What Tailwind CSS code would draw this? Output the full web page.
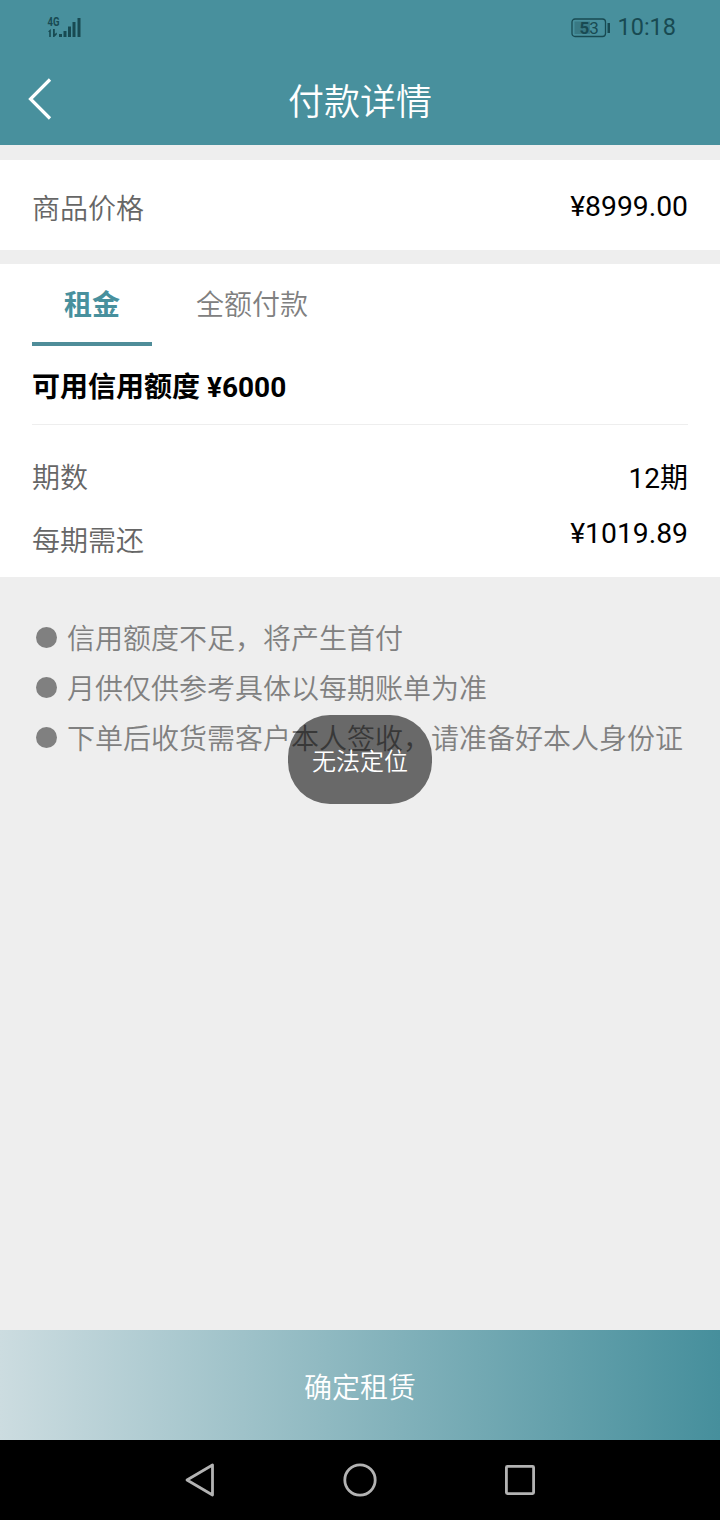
<!DOCTYPE html>
<html lang="zh-CN">
<head>
<meta charset="utf-8">
<title>付款详情</title>
<script src="https://cdn.jsdelivr.net/npm/@tailwindcss/browser@4"></script>
</head>
<body class="relative flex h-[1520px] w-[720px] flex-col overflow-hidden bg-[#eeeeee] font-['Roboto','Noto_Sans_CJK_SC',sans-serif] text-[28px] leading-10 text-black">
  <header class="h-[145px] shrink-0 bg-[#48909d]">
    <div class="flex h-14 items-center justify-between pr-11 pl-[46px] text-[#184a52]">
      <svg class="h-6 w-9" viewBox="0 0 36 24" fill="currentColor">
        <text x="1.500" y="10" font-family="Roboto" font-size="12" font-weight="700" textLength="12" lengthAdjust="spacingAndGlyphs">4G</text>
        <path d="M2 15.500l2.800-2.500v8H3.200v-5zM7 13h1.800v5l2-1.500v2L8.200 21H7zM13 18h3v3h-3zM17.500 15h3v6h-3zM22 10.500h3V21h-3zM26.500 6h3v15h-3zM31.500 2h3v19h-3z"/>
      </svg>
      <div class="flex items-center gap-1.5">
        <svg class="h-5 w-10" viewBox="0 0 40 20">
          <rect x="1" y="1" width="33.500" height="17.500" rx="3" fill="none" stroke="currentColor" stroke-width="1.300"/>
          <rect x="3.500" y="3.500" width="15.500" height="12.500" fill="#397984"/>
          <rect x="36.500" y="5" width="2.500" height="10" fill="currentColor"/>
          <text x="8.500" y="15.500" font-family="Roboto" font-size="17" fill="currentColor"><tspan font-weight="700">5</tspan>3</text>
        </svg>
        <span class="text-[23.500px] leading-none">10:18</span>
      </div>
    </div>
    <div class="grid h-[89px] grid-cols-[1fr_auto_1fr] items-center text-white">
      <svg class="mb-[3px] ml-7 h-[44px] w-6" viewBox="0 0 24 44" fill="none" stroke="#fff" stroke-width="3.200"><path d="M22 2.500L2.500 22l19.500 19.500"/></svg>
      <h1 class="pt-1 text-[36px] font-[350]">付款详情</h1>
    </div>
  </header>

  <section class="mt-[15px] flex h-[90px] shrink-0 items-center justify-between bg-white px-8">
    <span class="mt-2.5 font-[350] text-[#666]">商品价格</span><span class="mt-1 text-[28.300px]">¥8999.00</span>
  </section>

  <section class="mt-3.5 h-[313px] shrink-0 bg-white px-8">
    <nav class="flex h-[82px]">
      <div class="flex w-[120px] justify-center border-b-4 border-[#4f8d99] pt-[22px] font-bold text-[#48909d]">租金</div>
      <div class="ml-[29px] flex w-[142px] justify-center pt-[22px] font-[350] text-[#808080]">全额付款</div>
    </nav>
    <div class="flex h-[79px] items-center border-b border-[#eeeeee] pt-[5px] font-bold">可用信用额度 ¥6000</div>
    <div class="flex justify-between pt-[34px]"><span class="font-[350] text-[#666]">期数</span><span>12期</span></div>
    <div class="mt-[15px] flex items-start justify-between"><span class="mt-2 font-[350] text-[#666]">每期需还</span><span class="text-[28.300px]">¥1019.89</span></div>
  </section>

  <ul class="mt-9 flex flex-col font-[350] leading-[50px] text-[#808080]">
    <li class="flex h-[50px] items-center pl-9"><i class="mr-[11px] mb-0.5 size-[21px] rounded-full bg-[#808080]"></i><span class="-ml-px pt-[3px]">信用额度不足，将产生首付</span></li>
    <li class="flex h-[50px] items-center pl-9"><i class="mr-[11px] mb-0.5 size-[21px] rounded-full bg-[#808080]"></i><span class="-ml-px pt-[3px]">月供仅供参考具体以每期账单为准</span></li>
    <li class="flex h-[50px] items-center pl-9"><i class="mr-[11px] mb-0.5 size-[21px] rounded-full bg-[#808080]"></i><span class="-ml-px pt-[3px]">下单后收货需客户本人签收，请准备好本人身份证</span></li>
  </ul>

  <footer class="mt-auto shrink-0">
    <button class="flex h-[110px] w-full items-center justify-center bg-[linear-gradient(90deg,#ccdce0,#468f9c)] pt-2 font-[350] text-white">确定租赁</button>
    <nav class="flex h-20 items-center justify-center gap-[120px] bg-black">
      <svg class="size-10" viewBox="0 0 40 40" fill="none" stroke="#b3b3b3" stroke-width="2.800" stroke-linejoin="round"><path d="M32.500 5v30L7 20z"/></svg>
      <svg class="size-10" viewBox="0 0 40 40" fill="none" stroke="#b3b3b3" stroke-width="2.800"><circle cx="20" cy="20" r="15.200"/></svg>
      <svg class="size-10" viewBox="0 0 40 40" fill="none" stroke="#b3b3b3" stroke-width="2.800"><rect x="6.400" y="6.400" width="27.200" height="27.200" rx="1"/></svg>
    </nav>
  </footer>

  <div class="absolute top-[715px] left-[288px] flex h-[89px] w-36 items-center justify-center rounded-[42px] bg-black/56 pt-1 text-[24px] font-[350] text-white">无法定位</div>
</body>
</html>
